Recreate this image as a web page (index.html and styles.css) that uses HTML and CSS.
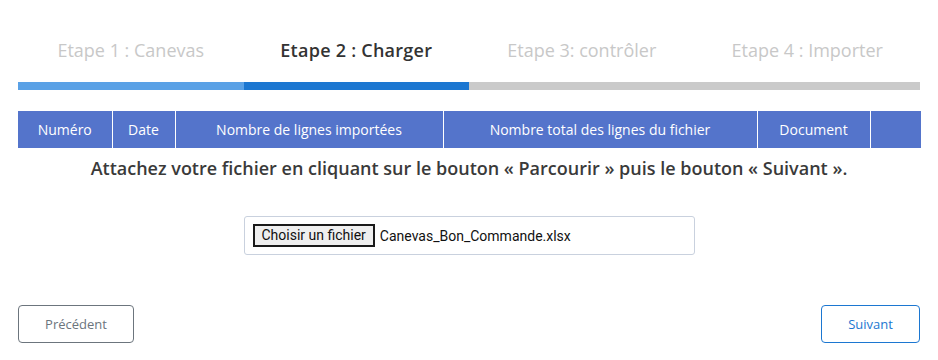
FILE: index.html
```html
<!DOCTYPE html>
<html lang="fr">
<head>
<meta charset="utf-8">
<link rel="stylesheet" href="styles.css">
</head>
<body>
<div class="wizard">
  <div class="steps">
    <div class="step done">Etape 1 : Canevas</div>
    <div class="step active">Etape 2 : Charger</div>
    <div class="step">Etape 3: contrôler</div>
    <div class="step">Etape 4 : Importer</div>
  </div>
  <div class="bar">
    <div class="seg seg-done"></div>
    <div class="seg seg-active"></div>
    <div class="seg seg-rest"></div>
  </div>
  <table class="grid">
    <thead>
      <tr>
        <th class="c1">Numéro</th>
        <th class="c2">Date</th>
        <th class="c3">Nombre de lignes importées</th>
        <th class="c4">Nombre total des lignes du fichier</th>
        <th class="c5">Document</th>
        <th class="c6"></th>
      </tr>
    </thead>
  </table>
  <p class="hint">Attachez votre fichier en cliquant sur le bouton « Parcourir » puis le bouton « Suivant ».</p>
  <div class="upload">
    <div class="file">
      <span class="file-btn">Choisir un fichier</span>
      <span class="file-name">Canevas_Bon_Commande.xlsx</span>
    </div>
  </div>
  <div class="actions">
    <button class="btn btn-prev">Précédent</button>
    <button class="btn btn-next">Suivant</button>
  </div>
</div>
</body>
</html>
```
FILE: styles.css
```css
* { box-sizing: border-box; }
html, body { margin: 0; padding: 0; background: #fff; }
body { font-family: "Open Sans", sans-serif; }
.wizard { width: 902px; margin-left: 18px; padding-top: 36px; }
.steps { display: grid; grid-template-columns: repeat(4, 1fr); height: 28px; }
.step { text-align: center; font-size: 18px; line-height: 28px; color: #c8c8c8; }
.step.active { color: #333; font-weight: 600; letter-spacing: 0.25px; }
.bar { display: flex; height: 8px; margin-top: 18px; }
.seg-done { width: 226px; background: #5aa1e6; }
.seg-active { width: 225px; background: #1c77d1; }
.seg-rest { flex: 1; background: #cacaca; }
.grid { width: 903px; border-collapse: collapse; margin-top: 21px; margin-left: 0; }
.grid th { background: #5474cb; color: #fff; font-weight: 400; font-size: 14px; height: 37px; padding: 0; border-left: 1px solid #fff; text-align: center; }
.grid th.c1 { border-left: none; width: 94px; }
.grid th.c2 { width: 63px; }
.grid th.c3 { width: 268px; }
.grid th.c4 { width: 314px; }
.grid th.c5 { width: 113px; }
.hint { margin: 6px 0 0; text-align: center; font-size: 18px; font-weight: 600; color: #3a3a3a; line-height: 28px; }
.upload { display: flex; justify-content: center; margin-top: 34px; }
.file { width: 451px; height: 39px; border: 1px solid #c9d1de; border-radius: 3px; display: flex; align-items: center; padding-left: 8px; font-family: Roboto, "Liberation Sans", sans-serif; font-size: 14px; color: #111; }
.file-btn { display: inline-block; height: 23px; line-height: 19px; padding: 0 7px; border: 2px solid #1a1a1a; background: #efefef; color: #111; }
.file-name { margin-left: 5px; }
.actions { display: flex; justify-content: space-between; margin-top: 50px; }
.btn { font-family: "Open Sans", sans-serif; font-size: 13px; font-weight: 500; height: 38px; background: #fff; border-radius: 4px; padding: 0; cursor: pointer; }
.btn-prev { width: 116px; border: 1px solid #6c757d; color: #6c757d; }
.btn-next { width: 99px; border: 1px solid #1c77d1; color: #1c77d1; }
```
